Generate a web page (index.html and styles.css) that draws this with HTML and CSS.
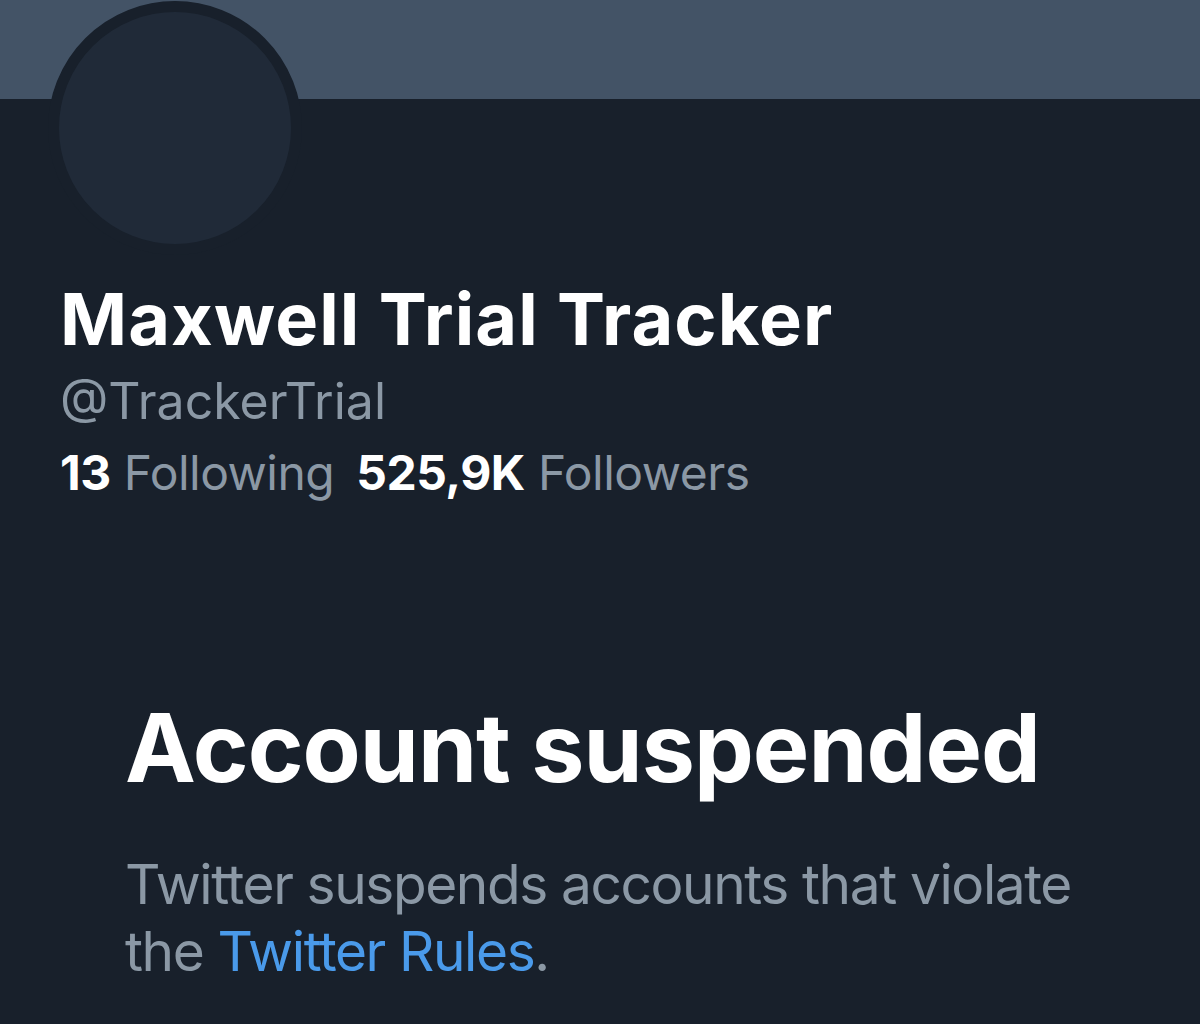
FILE: index.html
```html
<!DOCTYPE html>
<html lang="en">
<head>
<meta charset="utf-8">
<title>Maxwell Trial Tracker</title>
<link rel="stylesheet" href="styles.css">
</head>
<body>
<div class="page">
  <div class="banner"></div>
  <div class="profile">
    <div class="avatar"><div class="avatar-inner"></div></div>
    <h1 class="name">Maxwell Trial Tracker</h1>
    <div class="handle">@TrackerTrial</div>
    <div class="stats">
      <span class="stat"><b>13</b> Following</span>
      <span class="stat"><b>525,9K</b> Followers</span>
    </div>
  </div>
  <div class="notice">
    <h2 class="notice-title">Account suspended</h2>
    <p class="notice-text">Twitter suspends accounts that violate the <a class="link" href="#">Twitter Rules</a>.</p>
  </div>
</div>
</body>
</html>
```
FILE: styles.css
```css
html, body {
  margin: 0;
  padding: 0;
  background: #18202b;
}
.page {
  width: 1200px;
  height: 1024px;
  overflow: hidden;
  background: #18202b;
  font-family: Inter, "Liberation Sans", sans-serif;
}
.banner {
  height: 99px;
  background: #435366;
}
.profile {
  padding-left: 60px;
}
.avatar {
  width: 232px;
  height: 232px;
  border: 11px solid #18202b;
  border-radius: 50%;
  background: #202a38;
  margin-top: -98px;
  margin-left: -12px;
}
.name {
  margin: 24px 0 0;
  color: #ffffff;
  font-size: 72px;
  font-weight: 700;
  line-height: 80px;
  letter-spacing: 1.1px;
}
.handle {
  color: #8b98a5;
  font-size: 50px;
  line-height: 60px;
  margin-top: 12px;
}
.stats {
  display: flex;
  gap: 22px;
  color: #8b98a5;
  font-size: 48px;
  line-height: 60px;
  margin-top: 12px;
  letter-spacing: -0.5px;
}
.stat b {
  color: #ffffff;
  font-weight: 700;
}
.notice {
  padding-left: 125px;
  width: 1000px;
  margin-top: 190px;
}
.notice-title {
  margin: 0;
  color: #ffffff;
  font-size: 95px;
  font-weight: 700;
  line-height: 110px;
  letter-spacing: -1px;
}
.notice-text {
  margin: 48px 0 0;
  color: #8b98a5;
  font-size: 55px;
  line-height: 67px;
  letter-spacing: -1.4px;
}
.link {
  color: #4a9aea;
  text-decoration: none;
}
```
